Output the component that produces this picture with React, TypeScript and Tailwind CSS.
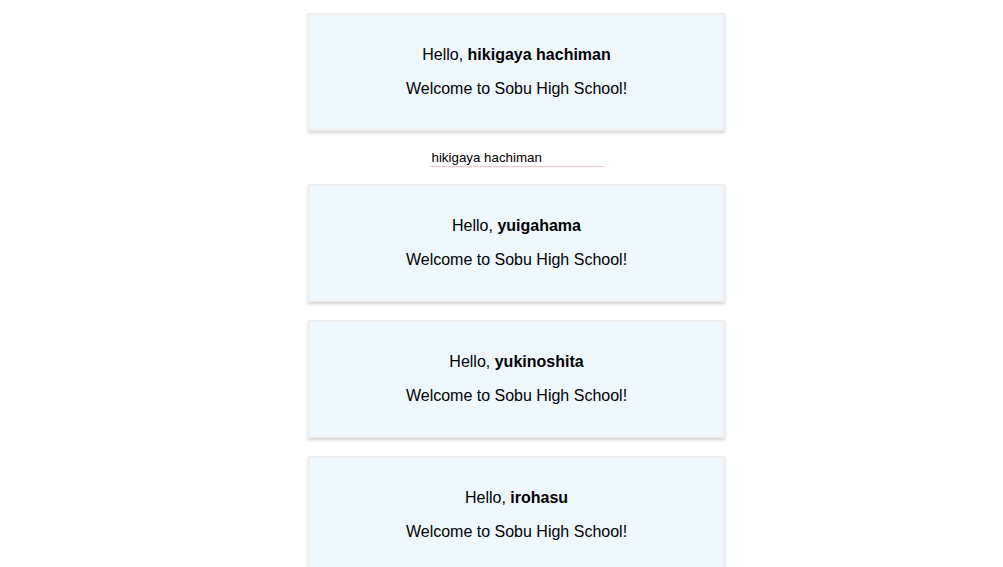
import { useEffect, useRef, useState } from "react";

const names = ["yuigahama", "yukinoshita", "irohasu"];

function Greeting({ name }: { name: string }) {
  return (
    <div className="w-[417px] border-2 border-[#eeeeee] bg-[#f0f8ff] px-4 py-[15px] text-center text-[16px] leading-[18px] text-black shadow-[0_2px_3px_rgba(0,0,0,0.18)]">
      <p className="my-4">
        Hello, <b className="font-bold">{name}</b>
      </p>
      <p className="my-4">Welcome to Sobu High School!</p>
    </div>
  );
}

export default function App() {
  const [name, setName] = useState("hikigaya hachiman");
  const inputRef = useRef<HTMLInputElement>(null);

  useEffect(() => {
    const el = inputRef.current;
    if (el) {
      el.focus();
      el.setSelectionRange(el.value.length, el.value.length);
    }
  }, []);

  return (
    <div
      className="flex min-h-screen flex-col items-center bg-white pl-[30px] pt-[13px]"
      style={{ fontFamily: '"Liberation Sans", Arial, sans-serif' }}
    >
      <Greeting name={name} />
      <input
        ref={inputRef}
        value={name}
        onChange={(e) => setName(e.target.value)}
        className="mt-[18px] mb-[17px] h-[18px] w-[174px] border-b border-[#ffc0cb] bg-transparent px-[2px] text-[13.33px] leading-[16px] text-black caret-black outline-none"
      />
      <div className="flex flex-col gap-[18px]">
        {names.map((n) => (
          <Greeting key={n} name={n} />
        ))}
      </div>
    </div>
  );
}
